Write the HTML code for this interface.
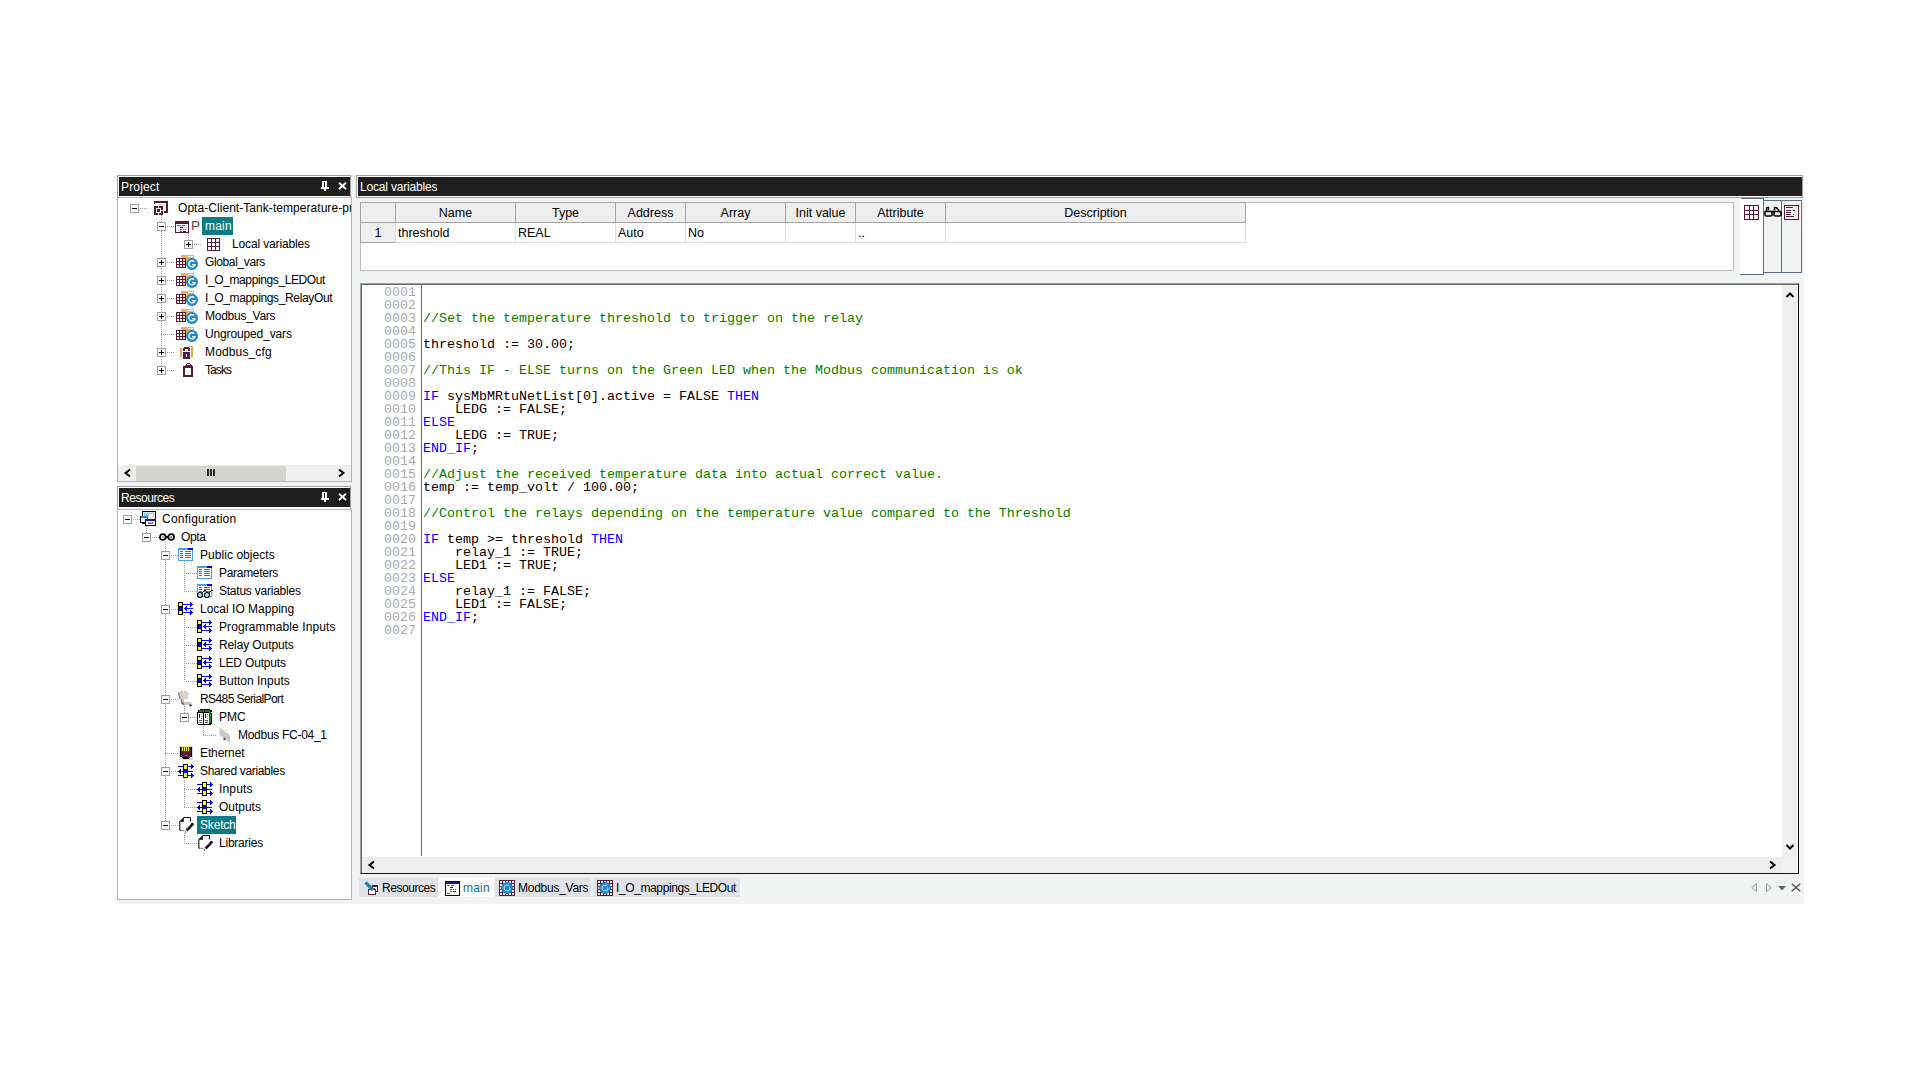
<!DOCTYPE html><html><head><meta charset="utf-8"><style>
*{box-sizing:border-box;margin:0;padding:0}
html,body{width:1920px;height:1080px;background:#fff;overflow:hidden;position:relative;font-family:"Liberation Sans",sans-serif}
.a{position:absolute}
svg{position:absolute;overflow:visible}
.hdr{position:absolute;background:#1e1e1e;color:#fff;font-size:12px;line-height:21px;padding-left:2px;white-space:nowrap;overflow:hidden}
.tree{position:absolute;background:#fff;border:1px solid #b4b4b4;overflow:hidden}
.tx{position:absolute;height:18px;line-height:18px;font-size:12px;color:#000;white-space:nowrap}
.sel{background:#0b7b85;color:#fff;padding:0 2px 0 3px}
.bx{position:absolute;width:9px;height:9px;border:1px solid #a0a0a0;background:#fff}
.bx:before{content:"";position:absolute;left:1px;top:3px;width:5px;height:1px;background:#000}
.bx.p:after{content:"";position:absolute;left:3px;top:1px;width:1px;height:5px;background:#000}
.vd{position:absolute;width:1px;background:repeating-linear-gradient(to bottom,#a0a0a0 0 1px,transparent 1px 2px)}
.hd{position:absolute;height:1px;background:repeating-linear-gradient(to right,#a0a0a0 0 1px,transparent 1px 2px)}
.th{position:absolute;top:202px;height:21px;border:1px solid #a5a5a5;background:#eeeeee;font-size:12.5px;line-height:21px;text-align:center;color:#000}
.td{position:absolute;top:223px;height:20px;border:1px solid #d9dee6;border-top:none;background:#fff;font-size:12.5px;line-height:20px;padding-left:2px;color:#000;white-space:nowrap}
.tn{position:absolute;top:223px;height:20px;border:1px solid #a5a5a5;border-top:none;background:#eeeeee;font-size:12.5px;line-height:20px;text-align:center;color:#000}
.code{position:absolute;left:423px;font-family:"Liberation Mono",monospace;font-size:13.33px;line-height:13px;height:13px;white-space:pre;color:#000}
.ln{position:absolute;left:384px;width:32px;text-align:right;font-family:"Liberation Mono",monospace;font-size:13.33px;line-height:13px;height:13px;white-space:pre;color:#aaaaaa}
.cm{color:#008000}.kw{color:#0000ff}
.tab{position:absolute;top:878px;height:19px;font-size:12px;line-height:19px;white-space:nowrap;color:#000;background:#dfe3e8}
</style></head><body>
<div class="a" style="left:117px;top:175px;width:1687px;height:729px;background:#f1f3f3"></div>
<div class="a" style="left:117px;top:175px;width:234px;height:23px;border:1px solid #a0a0a0;background:#fff"></div>
<div class="hdr" style="left:119px;top:177px;width:231px;height:19px;letter-spacing:0.167px;">Project</div>
<svg style="left:321px;top:181px" width="10" height="11" viewBox="0 0 10 11" shape-rendering="crispEdges"><rect x="1" y="0" width="5" height="6" fill="#fff"/><rect x="3" y="1" width="1" height="5" fill="#1e1e1e"/><rect x="0" y="6" width="8" height="2" fill="#fff"/><rect x="3" y="8" width="2" height="2" fill="#fff"/></svg>
<svg style="left:338px;top:182px" width="9" height="8" viewBox="0 0 9 8"><path d="M1 0.8L8 7M8 0.8L1 7" stroke="#fff" stroke-width="1.9"/></svg>
<div class="tree" style="left:117px;top:197px;width:235px;height:285px"></div>
<div class="a" style="left:118px;top:198px;width:233px;height:283px;overflow:hidden">
<div class="vd" style="left:43px;top:17px;height:154px"></div>
<div class="vd" style="left:70px;top:35px;height:11px"></div>
<div class="bx" style="left:12px;top:6px"></div>
<div class="hd" style="left:22px;top:10px;width:8px"></div>
<svg style="left:36px;top:3px" width="14" height="14" viewBox="0 0 14 14" shape-rendering="crispEdges"><rect x="2" y="2" width="10" height="9" fill="#eeeeee"/><rect x="2" y="3" width="3" height="2" fill="#fff"/><rect x="0" y="0" width="14" height="2" fill="#551a3a"/><rect x="0" y="2" width="1" height="1" fill="#551a3a"/><rect x="12" y="2" width="2" height="10" fill="#551a3a"/><rect x="10" y="10" width="4" height="2" fill="#551a3a"/><rect x="0" y="5" width="2" height="9" fill="#551a3a"/><rect x="0" y="5" width="4" height="2" fill="#551a3a"/><rect x="0" y="12" width="4" height="2" fill="#551a3a"/><rect x="5" y="5" width="4" height="2" fill="#551a3a"/><rect x="7" y="5" width="2" height="4" fill="#551a3a"/><rect x="7" y="10" width="2" height="4" fill="#551a3a"/><rect x="5" y="12" width="4" height="2" fill="#551a3a"/><rect x="3" y="8" width="3" height="3" fill="#551a3a"/></svg>
<div class="tx" style="left:60px;top:1px;letter-spacing:0.05px;">Opta-Client-Tank-temperature-project</div>
<div class="bx" style="left:39px;top:24px"></div>
<div class="hd" style="left:49px;top:28px;width:8px"></div>
<svg style="left:57px;top:23px" width="14" height="12" viewBox="0 0 14 12" shape-rendering="crispEdges"><rect x="0" y="0" width="14" height="12" fill="#551a3a"/><rect x="1" y="3" width="12" height="8" fill="#fff"/><rect x="2" y="4" width="10" height="6" fill="#eeeeee"/><rect x="2" y="4" width="4" height="1" fill="#5a6a88"/><rect x="7" y="4" width="3" height="1" fill="#0a9a0a"/><rect x="5" y="6" width="3" height="1" fill="#0000ff"/><rect x="5" y="8" width="2" height="1" fill="#5a6a88"/><rect x="8" y="8" width="1" height="1" fill="#0a9a0a"/><rect x="10" y="8" width="1" height="1" fill="#5a6a88"/><rect x="5" y="10" width="2" height="1" fill="#0a9a0a"/><rect x="8" y="10" width="3" height="1" fill="#0000ff"/></svg><div class="tx" style="left:73px;top:19px;color:#4a4a4a;font-size:13.5px;line-height:17px">P</div>
<div class="a sel" style="left:84px;top:19px;width:31px;height:18px"></div>
<div class="tx" style="left:87px;top:19px;color:#fff;letter-spacing:0.2px;">main</div>
<div class="bx p" style="left:66px;top:42px"></div>
<div class="hd" style="left:76px;top:46px;width:8px"></div>
<svg style="left:89px;top:40px" width="13" height="13" viewBox="0 0 13 13" shape-rendering="crispEdges"><rect x="0" y="0" width="13" height="13" fill="#551a3a"/><rect x="1" y="1" width="3" height="3" fill="#fff"/><rect x="1" y="5" width="3" height="3" fill="#fff"/><rect x="1" y="9" width="3" height="3" fill="#fff"/><rect x="5" y="1" width="3" height="3" fill="#fff"/><rect x="5" y="5" width="3" height="3" fill="#fff"/><rect x="5" y="9" width="3" height="3" fill="#fff"/><rect x="9" y="1" width="3" height="3" fill="#fff"/><rect x="9" y="5" width="3" height="3" fill="#fff"/><rect x="9" y="9" width="3" height="3" fill="#fff"/></svg>
<div class="tx" style="left:114px;top:37px;letter-spacing:-0.143px;">Local variables</div>
<div class="bx p" style="left:39px;top:60px"></div>
<div class="hd" style="left:49px;top:64px;width:8px"></div>
<svg style="left:58px;top:57px" width="23" height="15" viewBox="0 0 23 15" shape-rendering="crispEdges"><rect x="5" y="0" width="13" height="7" fill="#e8b060"/><rect x="11" y="0" width="7" height="1" fill="#e8b060"/><rect x="12" y="1" width="5" height="1" fill="#fff"/><rect x="0" y="3" width="10" height="10" fill="#551a3a"/><rect x="1" y="4" width="2" height="2" fill="#fff"/><rect x="1" y="7" width="2" height="2" fill="#fff"/><rect x="1" y="10" width="2" height="2" fill="#fff"/><rect x="4" y="4" width="2" height="2" fill="#fff"/><rect x="4" y="7" width="2" height="2" fill="#fff"/><rect x="4" y="10" width="2" height="2" fill="#fff"/><rect x="7" y="4" width="2" height="2" fill="#ffd070"/><rect x="7" y="7" width="2" height="2" fill="#ffd070"/><rect x="7" y="10" width="2" height="2" fill="#ffd070"/><circle cx="16" cy="9" r="6" fill="#1a8ad8" shape-rendering="auto"/><path d="M18.2 6.6A3.1 3.1 0 1 0 19 9.6H16" stroke="#fff" stroke-width="1.4" fill="none" shape-rendering="auto"/></svg>
<div class="tx" style="left:87px;top:55px;letter-spacing:-0.37px;">Global_vars</div>
<div class="bx p" style="left:39px;top:78px"></div>
<div class="hd" style="left:49px;top:82px;width:8px"></div>
<svg style="left:58px;top:75px" width="23" height="15" viewBox="0 0 23 15" shape-rendering="crispEdges"><rect x="5" y="0" width="13" height="7" fill="#e8b060"/><rect x="11" y="0" width="7" height="1" fill="#e8b060"/><rect x="12" y="1" width="5" height="1" fill="#fff"/><rect x="0" y="3" width="10" height="10" fill="#551a3a"/><rect x="1" y="4" width="2" height="2" fill="#fff"/><rect x="1" y="7" width="2" height="2" fill="#fff"/><rect x="1" y="10" width="2" height="2" fill="#fff"/><rect x="4" y="4" width="2" height="2" fill="#fff"/><rect x="4" y="7" width="2" height="2" fill="#fff"/><rect x="4" y="10" width="2" height="2" fill="#fff"/><rect x="7" y="4" width="2" height="2" fill="#ffd070"/><rect x="7" y="7" width="2" height="2" fill="#ffd070"/><rect x="7" y="10" width="2" height="2" fill="#ffd070"/><circle cx="16" cy="9" r="6" fill="#1a8ad8" shape-rendering="auto"/><path d="M18.2 6.6A3.1 3.1 0 1 0 19 9.6H16" stroke="#fff" stroke-width="1.4" fill="none" shape-rendering="auto"/></svg>
<div class="tx" style="left:87px;top:73px;letter-spacing:-0.389px;">I_O_mappings_LEDOut</div>
<div class="bx p" style="left:39px;top:96px"></div>
<div class="hd" style="left:49px;top:100px;width:8px"></div>
<svg style="left:58px;top:93px" width="23" height="15" viewBox="0 0 23 15" shape-rendering="crispEdges"><rect x="5" y="0" width="13" height="7" fill="#e8b060"/><rect x="11" y="0" width="7" height="1" fill="#e8b060"/><rect x="12" y="1" width="5" height="1" fill="#fff"/><rect x="0" y="3" width="10" height="10" fill="#551a3a"/><rect x="1" y="4" width="2" height="2" fill="#fff"/><rect x="1" y="7" width="2" height="2" fill="#fff"/><rect x="1" y="10" width="2" height="2" fill="#fff"/><rect x="4" y="4" width="2" height="2" fill="#fff"/><rect x="4" y="7" width="2" height="2" fill="#fff"/><rect x="4" y="10" width="2" height="2" fill="#fff"/><rect x="7" y="4" width="2" height="2" fill="#ffd070"/><rect x="7" y="7" width="2" height="2" fill="#ffd070"/><rect x="7" y="10" width="2" height="2" fill="#ffd070"/><circle cx="16" cy="9" r="6" fill="#1a8ad8" shape-rendering="auto"/><path d="M18.2 6.6A3.1 3.1 0 1 0 19 9.6H16" stroke="#fff" stroke-width="1.4" fill="none" shape-rendering="auto"/></svg>
<div class="tx" style="left:87px;top:91px;letter-spacing:-0.36px;">I_O_mappings_RelayOut</div>
<div class="bx p" style="left:39px;top:114px"></div>
<div class="hd" style="left:49px;top:118px;width:8px"></div>
<svg style="left:58px;top:111px" width="23" height="15" viewBox="0 0 23 15" shape-rendering="crispEdges"><rect x="5" y="0" width="13" height="7" fill="#e8b060"/><rect x="11" y="0" width="7" height="1" fill="#e8b060"/><rect x="12" y="1" width="5" height="1" fill="#fff"/><rect x="0" y="3" width="10" height="10" fill="#551a3a"/><rect x="1" y="4" width="2" height="2" fill="#fff"/><rect x="1" y="7" width="2" height="2" fill="#fff"/><rect x="1" y="10" width="2" height="2" fill="#fff"/><rect x="4" y="4" width="2" height="2" fill="#fff"/><rect x="4" y="7" width="2" height="2" fill="#fff"/><rect x="4" y="10" width="2" height="2" fill="#fff"/><rect x="7" y="4" width="2" height="2" fill="#ffd070"/><rect x="7" y="7" width="2" height="2" fill="#ffd070"/><rect x="7" y="10" width="2" height="2" fill="#ffd070"/><circle cx="16" cy="9" r="6" fill="#1a8ad8" shape-rendering="auto"/><path d="M18.2 6.6A3.1 3.1 0 1 0 19 9.6H16" stroke="#fff" stroke-width="1.4" fill="none" shape-rendering="auto"/></svg>
<div class="tx" style="left:87px;top:109px;letter-spacing:-0.26px;">Modbus_Vars</div>
<div class="hd" style="left:43px;top:136px;width:14px"></div>
<svg style="left:58px;top:129px" width="23" height="15" viewBox="0 0 23 15" shape-rendering="crispEdges"><rect x="5" y="0" width="13" height="7" fill="#e8b060"/><rect x="11" y="0" width="7" height="1" fill="#e8b060"/><rect x="12" y="1" width="5" height="1" fill="#fff"/><rect x="0" y="3" width="10" height="10" fill="#551a3a"/><rect x="1" y="4" width="2" height="2" fill="#fff"/><rect x="1" y="7" width="2" height="2" fill="#fff"/><rect x="1" y="10" width="2" height="2" fill="#fff"/><rect x="4" y="4" width="2" height="2" fill="#fff"/><rect x="4" y="7" width="2" height="2" fill="#fff"/><rect x="4" y="10" width="2" height="2" fill="#fff"/><rect x="7" y="4" width="2" height="2" fill="#ffd070"/><rect x="7" y="7" width="2" height="2" fill="#ffd070"/><rect x="7" y="10" width="2" height="2" fill="#ffd070"/><circle cx="16" cy="9" r="6" fill="#1a8ad8" shape-rendering="auto"/><path d="M18.2 6.6A3.1 3.1 0 1 0 19 9.6H16" stroke="#fff" stroke-width="1.4" fill="none" shape-rendering="auto"/></svg>
<div class="tx" style="left:87px;top:127px;letter-spacing:-0.138px;">Ungrouped_vars</div>
<div class="bx p" style="left:39px;top:150px"></div>
<div class="hd" style="left:49px;top:154px;width:8px"></div>
<svg style="left:62px;top:148px" width="13" height="13" viewBox="0 0 13 13" shape-rendering="crispEdges"><rect x="0" y="2" width="2" height="9" fill="#dca85a"/><rect x="11" y="0" width="2" height="11" fill="#dca85a"/><rect x="9" y="0" width="4" height="1" fill="#dca85a"/><rect x="4" y="1" width="5" height="2" fill="#551a3a"/><rect x="3" y="2" width="2" height="3" fill="#551a3a"/><rect x="8" y="2" width="2" height="3" fill="#551a3a"/><rect x="6" y="4" width="1" height="1" fill="#dca85a"/><rect x="3" y="6" width="7" height="7" fill="#551a3a"/><rect x="6" y="8" width="1" height="3" fill="#fff"/></svg>
<div class="tx" style="left:87px;top:145px;letter-spacing:0.144px;">Modbus_cfg</div>
<div class="bx p" style="left:39px;top:168px"></div>
<div class="hd" style="left:49px;top:172px;width:8px"></div>
<svg style="left:65px;top:165px" width="10" height="14" viewBox="0 0 10 14" shape-rendering="crispEdges"><rect x="4" y="0" width="3" height="1" fill="#551a3a"/><rect x="3" y="1" width="1" height="2" fill="#551a3a"/><rect x="7" y="1" width="1" height="2" fill="#551a3a"/><rect x="2" y="2" width="7" height="1" fill="#551a3a"/><rect x="0" y="3" width="10" height="11" fill="#551a3a"/><rect x="2" y="5" width="6" height="7" fill="#fff"/></svg>
<div class="tx" style="left:87px;top:163px;letter-spacing:-0.925px;">Tasks</div>
<div class="a" style="left:0px;top:267px;width:233px;height:16px;background:#efefef"></div>
<div class="a" style="left:18px;top:268px;width:150px;height:15px;background:#d3d3cf"></div>
<svg style="left:6px;top:271px" width="7" height="8" viewBox="0 0 7 8" shape-rendering="crispEdges"><path d="M6 0.5L1.5 4L6 7.5" stroke="#000" stroke-width="2" fill="none" shape-rendering="auto"/></svg>
<svg style="left:220px;top:271px" width="7" height="8" viewBox="0 0 7 8" shape-rendering="crispEdges"><path d="M1 0.5L5.5 4L1 7.5" stroke="#000" stroke-width="2" fill="none" shape-rendering="auto"/></svg>
<svg style="left:88px;top:270px" width="9" height="9" viewBox="0 0 9 9" shape-rendering="crispEdges"><rect x="1" y="1" width="1.5" height="7" fill="#222"/><rect x="4" y="1" width="1.5" height="7" fill="#222"/><rect x="7" y="1" width="1.5" height="7" fill="#222"/></svg>
</div>
<div class="a" style="left:117px;top:486px;width:234px;height:24px;border:1px solid #a0a0a0;background:#fff"></div>
<div class="hdr" style="left:119px;top:488px;width:231px;height:19px;letter-spacing:-0.438px;">Resources</div>
<svg style="left:321px;top:492px" width="10" height="11" viewBox="0 0 10 11" shape-rendering="crispEdges"><rect x="1" y="0" width="5" height="6" fill="#fff"/><rect x="3" y="1" width="1" height="5" fill="#1e1e1e"/><rect x="0" y="6" width="8" height="2" fill="#fff"/><rect x="3" y="8" width="2" height="2" fill="#fff"/></svg>
<svg style="left:338px;top:493px" width="9" height="8" viewBox="0 0 9 8"><path d="M1 0.8L8 7M8 0.8L1 7" stroke="#fff" stroke-width="1.9"/></svg>
<div class="tree" style="left:117px;top:509px;width:235px;height:391px"></div>
<div class="a" style="left:118px;top:510px;width:233px;height:389px;overflow:hidden">
<div class="vd" style="left:28px;top:16px;height:11px"></div>
<div class="vd" style="left:47px;top:32px;height:283px"></div>
<div class="vd" style="left:66px;top:51px;height:30px"></div>
<div class="vd" style="left:66px;top:105px;height:66px"></div>
<div class="vd" style="left:66px;top:196px;height:11px"></div>
<div class="vd" style="left:85px;top:214px;height:11px"></div>
<div class="vd" style="left:66px;top:268px;height:29px"></div>
<div class="vd" style="left:66px;top:323px;height:10px"></div>
<div class="bx" style="left:5px;top:5px"></div>
<div class="hd" style="left:15px;top:9px;width:7px"></div>
<svg style="left:22px;top:1px" width="16" height="15" viewBox="0 0 16 15" shape-rendering="crispEdges"><rect x="2" y="0" width="14" height="13" fill="#000"/><rect x="3" y="1" width="12" height="11" fill="#e8e8f0"/><rect x="4" y="2" width="10" height="3" fill="#80d0f0"/><rect x="9" y="3" width="4" height="2" fill="#fff"/><rect x="0" y="5" width="8" height="7" fill="#000"/><rect x="1" y="5" width="7" height="2" fill="#1a8ad8"/><rect x="1" y="7" width="6" height="4" fill="#eee"/><rect x="5" y="8" width="11" height="7" fill="#000"/><rect x="6" y="8" width="9" height="2" fill="#202080"/><rect x="6" y="10" width="9" height="4" fill="#fff"/><rect x="8" y="11" width="5" height="2" fill="#5a6a88"/><rect x="9" y="11" width="1" height="1" fill="#ff0"/><rect x="11" y="11" width="1" height="1" fill="#ff0"/></svg>
<div class="tx" style="left:44px;top:0px;letter-spacing:0.233px;">Configuration</div>
<div class="bx" style="left:24px;top:23px"></div>
<div class="hd" style="left:34px;top:27px;width:7px"></div>
<svg style="left:41px;top:23px" width="16" height="8" viewBox="0 0 16 8" shape-rendering="crispEdges"><g shape-rendering="auto"><circle cx="3.8" cy="4" r="2.9" fill="#fff" stroke="#000" stroke-width="1.7"/><circle cx="12.2" cy="4" r="2.9" fill="#fff" stroke="#000" stroke-width="1.7"/><rect x="6.5" y="3" width="3" height="2.2" fill="#000"/><rect x="3" y="3.2" width="1.6" height="1.6" fill="#888"/><rect x="11.4" y="3.2" width="1.6" height="1.6" fill="#555"/></g></svg>
<div class="tx" style="left:63px;top:18px;letter-spacing:-0.333px;">Opta</div>
<div class="bx" style="left:43px;top:41px"></div>
<div class="hd" style="left:53px;top:45px;width:7px"></div>
<svg style="left:60px;top:38px" width="15" height="13" viewBox="0 0 15 13" shape-rendering="crispEdges"><rect x="0" y="0" width="15" height="13" fill="#4aa0e8"/><rect x="1" y="2" width="13" height="10" fill="#fff"/><rect x="10" y="0" width="5" height="2" fill="#0000e0"/><rect x="2" y="3" width="3" height="1" fill="#5a6a88"/><rect x="7" y="3" width="6" height="1" fill="#5a6a88"/><rect x="2" y="5" width="3" height="1" fill="#5a6a88"/><rect x="7" y="5" width="6" height="1" fill="#5a6a88"/><rect x="2" y="7" width="3" height="1" fill="#5a6a88"/><rect x="7" y="7" width="6" height="1" fill="#5a6a88"/><rect x="2" y="9" width="3" height="1" fill="#5a6a88"/><rect x="7" y="9" width="6" height="1" fill="#5a6a88"/></svg>
<div class="tx" style="left:82px;top:36px;letter-spacing:0.054px;">Public objects</div>
<div class="hd" style="left:66px;top:63px;width:13px"></div>
<svg style="left:79px;top:56px" width="15" height="13" viewBox="0 0 15 13" shape-rendering="crispEdges"><rect x="0" y="0" width="15" height="13" fill="#4aa0e8"/><rect x="1" y="2" width="13" height="10" fill="#fff"/><rect x="10" y="0" width="5" height="2" fill="#0000e0"/><rect x="2" y="3" width="3" height="1" fill="#5a6a88"/><rect x="7" y="3" width="6" height="1" fill="#5a6a88"/><rect x="2" y="5" width="3" height="1" fill="#5a6a88"/><rect x="7" y="5" width="6" height="1" fill="#5a6a88"/><rect x="2" y="7" width="3" height="1" fill="#5a6a88"/><rect x="7" y="7" width="6" height="1" fill="#5a6a88"/><rect x="2" y="9" width="3" height="1" fill="#5a6a88"/><rect x="7" y="9" width="6" height="1" fill="#5a6a88"/></svg>
<div class="tx" style="left:101px;top:54px;letter-spacing:-0.3px;">Parameters</div>
<div class="hd" style="left:66px;top:81px;width:13px"></div>
<svg style="left:79px;top:74px" width="16" height="15" viewBox="0 0 16 15" shape-rendering="crispEdges"><rect x="0" y="0" width="15" height="13" fill="#4aa0e8"/><rect x="1" y="2" width="13" height="10" fill="#fff"/><rect x="10" y="0" width="5" height="2" fill="#0000e0"/><rect x="2" y="3" width="3" height="1" fill="#5a6a88"/><rect x="7" y="3" width="6" height="1" fill="#5a6a88"/><rect x="2" y="5" width="3" height="1" fill="#5a6a88"/><rect x="7" y="5" width="6" height="1" fill="#5a6a88"/><rect x="2" y="7" width="3" height="1" fill="#5a6a88"/><rect x="7" y="7" width="6" height="1" fill="#5a6a88"/><g shape-rendering="auto"><circle cx="3" cy="11" r="2.5" fill="#a8e8ff" stroke="#000" stroke-width="1.2"/><circle cx="10" cy="11" r="2.5" fill="#a8e8ff" stroke="#000" stroke-width="1.2"/><path d="M5 9L8 6L9 7M12 9L15 6L16 7" stroke="#000" stroke-width="1" fill="none"/></g></svg>
<div class="tx" style="left:101px;top:72px;letter-spacing:-0.233px;">Status variables</div>
<div class="bx" style="left:43px;top:95px"></div>
<div class="hd" style="left:53px;top:99px;width:7px"></div>
<svg style="left:60px;top:92px" width="15" height="13" viewBox="0 0 15 13" shape-rendering="crispEdges"><rect x="0" y="0" width="5" height="13" fill="#000"/><rect x="1" y="1" width="3" height="3" fill="#ffff00"/><rect x="1" y="5" width="3" height="3" fill="#0000ff"/><rect x="1" y="9" width="3" height="3" fill="#ffff00"/><rect x="5" y="2" width="8" height="1" fill="#0000ff"/><rect x="12" y="0" width="1" height="5" fill="#0000ff"/><rect x="13" y="1" width="1" height="3" fill="#0000ff"/><rect x="14" y="2" width="1" height="1" fill="#0000ff"/><rect x="7" y="6" width="8" height="1" fill="#0000ff"/><rect x="8" y="4" width="1" height="5" fill="#0000ff"/><rect x="7" y="5" width="1" height="3" fill="#0000ff"/><rect x="6" y="6" width="1" height="1" fill="#0000ff"/><rect x="5" y="10" width="8" height="1" fill="#0000ff"/><rect x="12" y="8" width="1" height="5" fill="#0000ff"/><rect x="13" y="9" width="1" height="3" fill="#0000ff"/><rect x="14" y="10" width="1" height="1" fill="#0000ff"/></svg>
<div class="tx" style="left:82px;top:90px;letter-spacing:0.007px;">Local IO Mapping</div>
<div class="hd" style="left:66px;top:117px;width:13px"></div>
<svg style="left:79px;top:110px" width="15" height="13" viewBox="0 0 15 13" shape-rendering="crispEdges"><rect x="0" y="0" width="5" height="13" fill="#000"/><rect x="1" y="1" width="3" height="3" fill="#ffff00"/><rect x="1" y="5" width="3" height="3" fill="#0000ff"/><rect x="1" y="9" width="3" height="3" fill="#ffff00"/><rect x="5" y="2" width="8" height="1" fill="#0000ff"/><rect x="12" y="0" width="1" height="5" fill="#0000ff"/><rect x="13" y="1" width="1" height="3" fill="#0000ff"/><rect x="14" y="2" width="1" height="1" fill="#0000ff"/><rect x="7" y="6" width="8" height="1" fill="#0000ff"/><rect x="8" y="4" width="1" height="5" fill="#0000ff"/><rect x="7" y="5" width="1" height="3" fill="#0000ff"/><rect x="6" y="6" width="1" height="1" fill="#0000ff"/><rect x="5" y="10" width="8" height="1" fill="#0000ff"/><rect x="12" y="8" width="1" height="5" fill="#0000ff"/><rect x="13" y="9" width="1" height="3" fill="#0000ff"/><rect x="14" y="10" width="1" height="1" fill="#0000ff"/></svg>
<div class="tx" style="left:101px;top:108px;letter-spacing:0.094px;">Programmable Inputs</div>
<div class="hd" style="left:66px;top:135px;width:13px"></div>
<svg style="left:79px;top:128px" width="15" height="13" viewBox="0 0 15 13" shape-rendering="crispEdges"><rect x="0" y="0" width="5" height="13" fill="#000"/><rect x="1" y="1" width="3" height="3" fill="#ffff00"/><rect x="1" y="5" width="3" height="3" fill="#0000ff"/><rect x="1" y="9" width="3" height="3" fill="#ffff00"/><rect x="5" y="2" width="8" height="1" fill="#0000ff"/><rect x="12" y="0" width="1" height="5" fill="#0000ff"/><rect x="13" y="1" width="1" height="3" fill="#0000ff"/><rect x="14" y="2" width="1" height="1" fill="#0000ff"/><rect x="7" y="6" width="8" height="1" fill="#0000ff"/><rect x="8" y="4" width="1" height="5" fill="#0000ff"/><rect x="7" y="5" width="1" height="3" fill="#0000ff"/><rect x="6" y="6" width="1" height="1" fill="#0000ff"/><rect x="5" y="10" width="8" height="1" fill="#0000ff"/><rect x="12" y="8" width="1" height="5" fill="#0000ff"/><rect x="13" y="9" width="1" height="3" fill="#0000ff"/><rect x="14" y="10" width="1" height="1" fill="#0000ff"/></svg>
<div class="tx" style="left:101px;top:126px;letter-spacing:-0.108px;">Relay Outputs</div>
<div class="hd" style="left:66px;top:153px;width:13px"></div>
<svg style="left:79px;top:146px" width="15" height="13" viewBox="0 0 15 13" shape-rendering="crispEdges"><rect x="0" y="0" width="5" height="13" fill="#000"/><rect x="1" y="1" width="3" height="3" fill="#ffff00"/><rect x="1" y="5" width="3" height="3" fill="#0000ff"/><rect x="1" y="9" width="3" height="3" fill="#ffff00"/><rect x="5" y="2" width="8" height="1" fill="#0000ff"/><rect x="12" y="0" width="1" height="5" fill="#0000ff"/><rect x="13" y="1" width="1" height="3" fill="#0000ff"/><rect x="14" y="2" width="1" height="1" fill="#0000ff"/><rect x="7" y="6" width="8" height="1" fill="#0000ff"/><rect x="8" y="4" width="1" height="5" fill="#0000ff"/><rect x="7" y="5" width="1" height="3" fill="#0000ff"/><rect x="6" y="6" width="1" height="1" fill="#0000ff"/><rect x="5" y="10" width="8" height="1" fill="#0000ff"/><rect x="12" y="8" width="1" height="5" fill="#0000ff"/><rect x="13" y="9" width="1" height="3" fill="#0000ff"/><rect x="14" y="10" width="1" height="1" fill="#0000ff"/></svg>
<div class="tx" style="left:101px;top:144px;letter-spacing:-0.17px;">LED Outputs</div>
<div class="hd" style="left:66px;top:171px;width:13px"></div>
<svg style="left:79px;top:164px" width="15" height="13" viewBox="0 0 15 13" shape-rendering="crispEdges"><rect x="0" y="0" width="5" height="13" fill="#000"/><rect x="1" y="1" width="3" height="3" fill="#ffff00"/><rect x="1" y="5" width="3" height="3" fill="#0000ff"/><rect x="1" y="9" width="3" height="3" fill="#ffff00"/><rect x="5" y="2" width="8" height="1" fill="#0000ff"/><rect x="12" y="0" width="1" height="5" fill="#0000ff"/><rect x="13" y="1" width="1" height="3" fill="#0000ff"/><rect x="14" y="2" width="1" height="1" fill="#0000ff"/><rect x="7" y="6" width="8" height="1" fill="#0000ff"/><rect x="8" y="4" width="1" height="5" fill="#0000ff"/><rect x="7" y="5" width="1" height="3" fill="#0000ff"/><rect x="6" y="6" width="1" height="1" fill="#0000ff"/><rect x="5" y="10" width="8" height="1" fill="#0000ff"/><rect x="12" y="8" width="1" height="5" fill="#0000ff"/><rect x="13" y="9" width="1" height="3" fill="#0000ff"/><rect x="14" y="10" width="1" height="1" fill="#0000ff"/></svg>
<div class="tx" style="left:101px;top:162px;letter-spacing:0px;">Button Inputs</div>
<div class="bx" style="left:43px;top:185px"></div>
<div class="hd" style="left:53px;top:189px;width:7px"></div>
<svg style="left:60px;top:180px" width="16" height="17" viewBox="0 0 16 17" shape-rendering="crispEdges"><g shape-rendering="auto"><path d="M4.5 8.5V11.5Q4.5 13.5 6.5 13.5H11Q13 13.5 13 16" stroke="#c4c4c4" stroke-width="3" fill="none"/><path d="M3.3 9V11.5Q3.3 14.5 6.5 14.8" stroke="#555" stroke-width="0.9" fill="none"/><path d="M0.5 2.5H11L9.5 9H2Z" fill="#d0d0d0"/><path d="M0.5 2.5L2 9" stroke="#777" stroke-width="1.2"/><rect x="2" y="1" width="3" height="1.5" fill="#f0b060"/><rect x="6" y="1" width="3" height="1.5" fill="#f0c070"/><circle cx="12.5" cy="15.5" r="1.1" fill="#111"/><circle cx="5" cy="13" r="0.7" fill="#6a1a4a"/></g></svg>
<div class="tx" style="left:82px;top:180px;letter-spacing:-0.593px;">RS485 SerialPort</div>
<div class="bx" style="left:62px;top:203px"></div>
<div class="hd" style="left:72px;top:207px;width:7px"></div>
<svg style="left:79px;top:199px" width="15" height="16" viewBox="0 0 15 16" shape-rendering="crispEdges"><rect x="3" y="0" width="10" height="1" fill="#000"/><rect x="1" y="1" width="14" height="3" fill="#000"/><rect x="2" y="1" width="5" height="2" fill="#0a8a0a"/><rect x="8" y="1" width="5" height="2" fill="#0a8a0a"/><rect x="0" y="3" width="15" height="13" fill="#000"/><rect x="12" y="3" width="2" height="11" fill="#0a8a0a"/><rect x="1" y="4" width="5" height="11" fill="#fff"/><rect x="7" y="4" width="5" height="11" fill="#fff"/><rect x="2" y="5" width="1" height="4" fill="#202080"/><rect x="8" y="5" width="1" height="4" fill="#202080"/><rect x="4" y="5" width="1" height="1" fill="#e07a20"/><rect x="10" y="5" width="1" height="1" fill="#e07a20"/><rect x="4" y="7" width="1" height="1" fill="#e07a20"/><rect x="10" y="7" width="1" height="1" fill="#e07a20"/><rect x="4" y="9" width="1" height="1" fill="#e07a20"/><rect x="10" y="9" width="1" height="1" fill="#e07a20"/><rect x="2" y="11" width="3" height="1" fill="#555"/><rect x="2" y="13" width="3" height="1" fill="#555"/><rect x="8" y="11" width="3" height="1" fill="#555"/><rect x="8" y="13" width="3" height="1" fill="#555"/><rect x="0" y="15" width="1" height="1" fill="#fff"/><rect x="14" y="15" width="1" height="1" fill="#fff"/><rect x="14" y="3" width="1" height="1" fill="#fff"/></svg>
<div class="tx" style="left:101px;top:198px;letter-spacing:-0.05px;">PMC</div>
<div class="hd" style="left:85px;top:225px;width:13px"></div>
<svg style="left:101px;top:217px" width="12" height="17" viewBox="0 0 12 17" shape-rendering="crispEdges"><g shape-rendering="auto"><path d="M0.5 0.5L11 8.5V16L0.5 8Z" fill="#c8c8c8"/><path d="M0.5 0.5L11 8.5" stroke="#d8d8d8" stroke-width="0.8"/><circle cx="5.5" cy="12" r="1.2" fill="#555"/><rect x="7" y="3" width="1" height="1" fill="#f0a040"/></g></svg>
<div class="tx" style="left:120px;top:216px;letter-spacing:-0.285px;">Modbus FC-04_1</div>
<div class="hd" style="left:47px;top:243px;width:13px"></div>
<svg style="left:61px;top:236px" width="14" height="14" viewBox="0 0 14 14" shape-rendering="crispEdges"><rect x="0" y="0" width="14" height="14" fill="#d8dde2"/><rect x="1" y="1" width="12" height="11" fill="#000"/><rect x="2" y="1" width="10" height="7" fill="#5a1a4a"/><rect x="3" y="1" width="1" height="4" fill="#ffff20"/><rect x="5" y="1" width="1" height="4" fill="#ffff20"/><rect x="7" y="1" width="1" height="4" fill="#ffff20"/><rect x="9" y="1" width="1" height="4" fill="#ffff20"/><rect x="2" y="8" width="10" height="2" fill="#5a1a4a"/><rect x="3" y="10" width="8" height="1" fill="#5a1a4a"/><rect x="1" y="11" width="2" height="1" fill="#d8dde2"/><rect x="11" y="11" width="2" height="1" fill="#d8dde2"/><rect x="4" y="12" width="6" height="1" fill="#000"/><rect x="6" y="9" width="2" height="1" fill="#888"/></svg>
<div class="tx" style="left:82px;top:234px;letter-spacing:-0.114px;">Ethernet</div>
<div class="bx" style="left:43px;top:257px"></div>
<div class="hd" style="left:53px;top:261px;width:7px"></div>
<svg style="left:60px;top:254px" width="16" height="14" viewBox="0 0 16 14" shape-rendering="crispEdges"><rect x="5" y="0" width="5" height="14" fill="#000"/><rect x="6" y="1" width="3" height="4" fill="#ffff00"/><rect x="6" y="5" width="3" height="4" fill="#0000ff"/><rect x="6" y="9" width="3" height="4" fill="#ffff00"/><rect x="0" y="2" width="5" height="1" fill="#0000ff"/><rect x="10" y="2" width="4" height="1" fill="#0000ff"/><rect x="13" y="0" width="1" height="5" fill="#0000ff"/><rect x="14" y="1" width="1" height="3" fill="#0000ff"/><rect x="15" y="2" width="1" height="1" fill="#0000ff"/><rect x="1" y="7" width="4" height="1" fill="#0000ff"/><rect x="10" y="7" width="5" height="1" fill="#0000ff"/><rect x="2" y="5" width="1" height="5" fill="#0000ff"/><rect x="1" y="6" width="1" height="3" fill="#0000ff"/><rect x="0" y="7" width="1" height="1" fill="#0000ff"/><rect x="0" y="11" width="5" height="1" fill="#0000ff"/><rect x="10" y="11" width="4" height="1" fill="#0000ff"/><rect x="13" y="9" width="1" height="5" fill="#0000ff"/><rect x="14" y="10" width="1" height="3" fill="#0000ff"/><rect x="15" y="11" width="1" height="1" fill="#0000ff"/></svg>
<div class="tx" style="left:82px;top:252px;letter-spacing:-0.327px;">Shared variables</div>
<div class="hd" style="left:66px;top:279px;width:13px"></div>
<svg style="left:79px;top:272px" width="16" height="14" viewBox="0 0 16 14" shape-rendering="crispEdges"><rect x="5" y="0" width="5" height="14" fill="#000"/><rect x="6" y="1" width="3" height="4" fill="#ffff00"/><rect x="6" y="5" width="3" height="4" fill="#0000ff"/><rect x="6" y="9" width="3" height="4" fill="#ffff00"/><rect x="0" y="2" width="5" height="1" fill="#0000ff"/><rect x="10" y="2" width="4" height="1" fill="#0000ff"/><rect x="13" y="0" width="1" height="5" fill="#0000ff"/><rect x="14" y="1" width="1" height="3" fill="#0000ff"/><rect x="15" y="2" width="1" height="1" fill="#0000ff"/><rect x="1" y="7" width="4" height="1" fill="#0000ff"/><rect x="10" y="7" width="5" height="1" fill="#0000ff"/><rect x="2" y="5" width="1" height="5" fill="#0000ff"/><rect x="1" y="6" width="1" height="3" fill="#0000ff"/><rect x="0" y="7" width="1" height="1" fill="#0000ff"/><rect x="0" y="11" width="5" height="1" fill="#0000ff"/><rect x="10" y="11" width="4" height="1" fill="#0000ff"/><rect x="13" y="9" width="1" height="5" fill="#0000ff"/><rect x="14" y="10" width="1" height="3" fill="#0000ff"/><rect x="15" y="11" width="1" height="1" fill="#0000ff"/></svg>
<div class="tx" style="left:101px;top:270px;letter-spacing:0.18px;">Inputs</div>
<div class="hd" style="left:66px;top:297px;width:13px"></div>
<svg style="left:79px;top:290px" width="16" height="14" viewBox="0 0 16 14" shape-rendering="crispEdges"><rect x="5" y="0" width="5" height="14" fill="#000"/><rect x="6" y="1" width="3" height="4" fill="#ffff00"/><rect x="6" y="5" width="3" height="4" fill="#0000ff"/><rect x="6" y="9" width="3" height="4" fill="#ffff00"/><rect x="0" y="2" width="5" height="1" fill="#0000ff"/><rect x="10" y="2" width="4" height="1" fill="#0000ff"/><rect x="13" y="0" width="1" height="5" fill="#0000ff"/><rect x="14" y="1" width="1" height="3" fill="#0000ff"/><rect x="15" y="2" width="1" height="1" fill="#0000ff"/><rect x="1" y="7" width="4" height="1" fill="#0000ff"/><rect x="10" y="7" width="5" height="1" fill="#0000ff"/><rect x="2" y="5" width="1" height="5" fill="#0000ff"/><rect x="1" y="6" width="1" height="3" fill="#0000ff"/><rect x="0" y="7" width="1" height="1" fill="#0000ff"/><rect x="0" y="11" width="5" height="1" fill="#0000ff"/><rect x="10" y="11" width="4" height="1" fill="#0000ff"/><rect x="13" y="9" width="1" height="5" fill="#0000ff"/><rect x="14" y="10" width="1" height="3" fill="#0000ff"/><rect x="15" y="11" width="1" height="1" fill="#0000ff"/></svg>
<div class="tx" style="left:101px;top:288px;letter-spacing:-0.017px;">Outputs</div>
<div class="bx" style="left:43px;top:311px"></div>
<div class="hd" style="left:53px;top:315px;width:7px"></div>
<svg style="left:61px;top:306px" width="16" height="17" viewBox="0 0 16 17" shape-rendering="crispEdges"><g shape-rendering="auto"><path d="M4.5 1.5H11Q11.5 1.5 11.5 2.5V5.5" stroke="#111" stroke-width="1.1" fill="none"/><path d="M0 5.8L4.8 1L4.8 5.8Z" fill="#111"/><path d="M1 5.5H4.5" stroke="#6a1a4a" stroke-width="1"/><path d="M0.8 5.5V14" stroke="#222" stroke-width="1.2" fill="none"/><path d="M1.5 14.5H5.5" stroke="#999" stroke-width="1.2"/><circle cx="1.3" cy="14.3" r="0.7" fill="#6a1a4a"/><path d="M7.5 14.5L12.8 9.2" stroke="#111" stroke-width="2.6"/><path d="M7 14L12 9" stroke="#6a1a4a" stroke-width="0.8"/><circle cx="13.3" cy="8.3" r="1.5" fill="#111"/><circle cx="6.5" cy="16" r="0.8" fill="#3a4a7a"/></g></svg>
<div class="a sel" style="left:79px;top:306px;width:39px;height:18px"></div>
<div class="tx" style="left:82px;top:306px;color:#fff;letter-spacing:-0.18px;">Sketch</div>
<div class="hd" style="left:66px;top:333px;width:13px"></div>
<svg style="left:80px;top:324px" width="16" height="17" viewBox="0 0 16 17" shape-rendering="crispEdges"><g shape-rendering="auto"><path d="M4.5 1.5H11Q11.5 1.5 11.5 2.5V5.5" stroke="#111" stroke-width="1.1" fill="none"/><path d="M0 5.8L4.8 1L4.8 5.8Z" fill="#111"/><path d="M1 5.5H4.5" stroke="#6a1a4a" stroke-width="1"/><path d="M0.8 5.5V14" stroke="#222" stroke-width="1.2" fill="none"/><path d="M1.5 14.5H5.5" stroke="#999" stroke-width="1.2"/><circle cx="1.3" cy="14.3" r="0.7" fill="#6a1a4a"/><path d="M7.5 14.5L12.8 9.2" stroke="#111" stroke-width="2.6"/><path d="M7 14L12 9" stroke="#6a1a4a" stroke-width="0.8"/><circle cx="13.3" cy="8.3" r="1.5" fill="#111"/><circle cx="6.5" cy="16" r="0.8" fill="#3a4a7a"/></g></svg>
<div class="tx" style="left:101px;top:324px;letter-spacing:-0.225px;">Libraries</div>
</div>
<div class="a" style="left:356px;top:175px;width:1447px;height:23px;border:1px solid #a0a0a0;background:#fff"></div>
<div class="hdr" style="left:358px;top:177px;width:1444px;height:19px;letter-spacing:-0.18px;">Local variables</div>
<div class="a" style="left:360px;top:202px;width:1374px;height:69px;border:1px solid #bcbcbc;background:#fff"></div>
<div class="th" style="left:360px;width:36px"></div>
<div class="th" style="left:395px;width:121px">Name</div>
<div class="th" style="left:515px;width:101px">Type</div>
<div class="th" style="left:615px;width:71px">Address</div>
<div class="th" style="left:685px;width:101px">Array</div>
<div class="th" style="left:785px;width:71px">Init value</div>
<div class="th" style="left:855px;width:91px">Attribute</div>
<div class="th" style="left:945px;width:301px">Description</div>
<div class="tn" style="left:360px;width:36px">1</div>
<div class="td" style="left:395px;width:121px">threshold</div>
<div class="td" style="left:515px;width:101px">REAL</div>
<div class="td" style="left:615px;width:71px">Auto</div>
<div class="td" style="left:685px;width:101px">No</div>
<div class="td" style="left:785px;width:71px"></div>
<div class="td" style="left:855px;width:91px">..</div>
<div class="td" style="left:945px;width:301px"></div>
<div class="a" style="left:360px;top:283px;width:1439px;height:591px;border:1px solid #111;border-top-color:#a0a0a0;border-left-color:#a0a0a0;background:#fff"></div>
<div class="a" style="left:361px;top:284px;width:1437px;height:589px;border-top:1px solid #696969;border-left:1px solid #696969"></div>
<div class="a" style="left:421px;top:285px;width:1px;height:571px;background:#5a6a88"></div>
<div class="ln" style="top:286px">0001</div>
<div class="ln" style="top:299px">0002</div>
<div class="ln" style="top:312px">0003</div>
<div class="code" style="top:312px"><span class="cm">//Set the temperature threshold to trigger on the relay</span></div>
<div class="ln" style="top:325px">0004</div>
<div class="ln" style="top:338px">0005</div>
<div class="code" style="top:338px">threshold := 30.00;</div>
<div class="ln" style="top:351px">0006</div>
<div class="ln" style="top:364px">0007</div>
<div class="code" style="top:364px"><span class="cm">//This IF - ELSE turns on the Green LED when the Modbus communication is ok</span></div>
<div class="ln" style="top:377px">0008</div>
<div class="ln" style="top:390px">0009</div>
<div class="code" style="top:390px"><span class="kw">IF</span> sysMbMRtuNetList[0].active = FALSE <span class="kw">THEN</span></div>
<div class="ln" style="top:403px">0010</div>
<div class="code" style="top:403px">    LEDG := FALSE;</div>
<div class="ln" style="top:416px">0011</div>
<div class="code" style="top:416px"><span class="kw">ELSE</span></div>
<div class="ln" style="top:429px">0012</div>
<div class="code" style="top:429px">    LEDG := TRUE;</div>
<div class="ln" style="top:442px">0013</div>
<div class="code" style="top:442px"><span class="kw">END_IF</span>;</div>
<div class="ln" style="top:455px">0014</div>
<div class="ln" style="top:468px">0015</div>
<div class="code" style="top:468px"><span class="cm">//Adjust the received temperature data into actual correct value.</span></div>
<div class="ln" style="top:481px">0016</div>
<div class="code" style="top:481px">temp := temp_volt / 100.00;</div>
<div class="ln" style="top:494px">0017</div>
<div class="ln" style="top:507px">0018</div>
<div class="code" style="top:507px"><span class="cm">//Control the relays depending on the temperature value compared to the Threshold</span></div>
<div class="ln" style="top:520px">0019</div>
<div class="ln" style="top:533px">0020</div>
<div class="code" style="top:533px"><span class="kw">IF</span> temp &gt;= threshold <span class="kw">THEN</span></div>
<div class="ln" style="top:546px">0021</div>
<div class="code" style="top:546px">    relay_1 := TRUE;</div>
<div class="ln" style="top:559px">0022</div>
<div class="code" style="top:559px">    LED1 := TRUE;</div>
<div class="ln" style="top:572px">0023</div>
<div class="code" style="top:572px"><span class="kw">ELSE</span></div>
<div class="ln" style="top:585px">0024</div>
<div class="code" style="top:585px">    relay_1 := FALSE;</div>
<div class="ln" style="top:598px">0025</div>
<div class="code" style="top:598px">    LED1 := FALSE;</div>
<div class="ln" style="top:611px">0026</div>
<div class="code" style="top:611px"><span class="kw">END_IF</span>;</div>
<div class="ln" style="top:624px">0027</div>
<div class="a" style="left:1740px;top:198px;width:24px;height:77px;background:#fff;border-top:1px solid #5c6c88;border-right:1px solid #5c6c88;border-bottom:1px solid #5c6c88"></div>
<div class="a" style="left:1740px;top:198px;width:1px;height:1px;background:#f1f3f3"></div>
<div class="a" style="left:1763px;top:200px;width:19px;height:73px;background:#f2f4f4;border:1px solid #5c6c88"></div>
<div class="a" style="left:1781px;top:200px;width:21px;height:73px;background:#f2f4f4;border:1px solid #5c6c88"></div>
<svg style="left:1744px;top:205px" width="15" height="15" viewBox="0 0 15 15" shape-rendering="crispEdges"><rect x="0" y="0" width="15" height="15" fill="#551a3a"/><rect x="1" y="1" width="4" height="4" fill="#eee"/><rect x="6" y="1" width="3" height="4" fill="#fff"/><rect x="10" y="1" width="4" height="4" fill="#eee"/><rect x="1" y="6" width="4" height="3" fill="#fff"/><rect x="6" y="6" width="3" height="3" fill="#fff"/><rect x="10" y="6" width="4" height="3" fill="#fff"/><rect x="1" y="10" width="4" height="4" fill="#eee"/><rect x="6" y="10" width="3" height="4" fill="#fff"/><rect x="10" y="10" width="4" height="4" fill="#eee"/></svg>
<svg style="left:1764px;top:207px" width="17" height="10" viewBox="0 0 17 10" shape-rendering="crispEdges"><g shape-rendering="auto"><path d="M0.5 4.5H17M1 4.5V8Q1 9 2.5 9H6.5Q8 9 8 8V4.5M10 4.5V8Q10 9 11.5 9H15.5Q17 9 17 8V4.5" stroke="#000" stroke-width="1.6" fill="none"/><path d="M2.5 4V1.5Q2.5 0.5 3.5 0.5H4.5V3.5M10.5 3.5V1Q10.5 0.5 11.5 0.5Q13 0.5 14 2.5L15 3.5" stroke="#000" stroke-width="1.5" fill="none"/></g></svg>
<svg style="left:1784px;top:205px" width="15" height="15" viewBox="0 0 15 15" shape-rendering="crispEdges"><rect x="0" y="0" width="15" height="15" fill="#551a3a"/><rect x="1" y="1" width="13" height="13" fill="#fff"/><rect x="10" y="2" width="3" height="11" fill="#eee"/><rect x="2" y="2" width="7" height="1" fill="#551a3a"/><rect x="2" y="5" width="5" height="1" fill="#551a3a"/><rect x="9" y="5" width="2" height="1" fill="#551a3a"/><rect x="2" y="7" width="5" height="1" fill="#551a3a"/><rect x="2" y="9" width="5" height="1" fill="#551a3a"/><rect x="9" y="9" width="1" height="1" fill="#551a3a"/><rect x="2" y="11" width="8" height="1" fill="#551a3a"/></svg>
<div class="a" style="left:1782px;top:285px;width:16px;height:572px;background:#eeeeee"></div>
<div class="a" style="left:362px;top:857px;width:1420px;height:16px;background:#eeeeee"></div>
<div class="a" style="left:1782px;top:857px;width:16px;height:16px;background:#f1f3f3"></div>
<svg style="left:1786px;top:291px" width="8" height="7" viewBox="0 0 8 7" shape-rendering="crispEdges"><path d="M0.5 6L4 2.5L7.5 6" stroke="#000" stroke-width="2" fill="none" shape-rendering="auto"/></svg>
<svg style="left:1786px;top:844px" width="8" height="7" viewBox="0 0 8 7" shape-rendering="crispEdges"><path d="M0.5 1L4 4.5L7.5 1" stroke="#000" stroke-width="2" fill="none" shape-rendering="auto"/></svg>
<svg style="left:368px;top:861px" width="7" height="8" viewBox="0 0 7 8" shape-rendering="crispEdges"><path d="M6 0.5L1.5 4L6 7.5" stroke="#000" stroke-width="2" fill="none" shape-rendering="auto"/></svg>
<svg style="left:1769px;top:861px" width="7" height="8" viewBox="0 0 7 8" shape-rendering="crispEdges"><path d="M1 0.5L5.5 4L1 7.5" stroke="#000" stroke-width="2" fill="none" shape-rendering="auto"/></svg>
<div class="tab" style="left:359px;width:79px"></div>
<svg style="left:363px;top:880px" width="17" height="16" viewBox="0 0 17 16" shape-rendering="crispEdges"><rect x="9" y="5" width="6" height="7" fill="#551a3a"/><rect x="10" y="7" width="4" height="4" fill="#fff"/><rect x="11" y="8" width="1" height="1" fill="#551a3a"/><rect x="5" y="9" width="8" height="6" fill="#551a3a"/><rect x="6" y="10" width="6" height="4" fill="#fff"/><g shape-rendering="auto"><path d="M2.5 2.5L10 10" stroke="#1a80d8" stroke-width="3.2"/><path d="M2.5 2.5L10 10" stroke="#1a8a70" stroke-width="1.2"/></g></svg>
<div class="tx" style="left:382px;top:879px;height:19px;line-height:19px;letter-spacing:-0.438px;">Resources</div>
<div class="tab" style="left:439px;width:55px;background:#fff"></div>
<svg style="left:445px;top:881px" width="15" height="15" viewBox="0 0 15 15" shape-rendering="crispEdges"><rect x="0" y="0" width="15" height="15" fill="#000"/><rect x="1" y="1" width="13" height="2" fill="#1a1a70"/><rect x="1" y="3" width="13" height="11" fill="#fff"/><rect x="2" y="4" width="3" height="1" fill="#5a6a88"/><rect x="6" y="4" width="3" height="1" fill="#0a9a0a"/><rect x="5" y="6" width="3" height="1" fill="#0000ff"/><rect x="5" y="8" width="2" height="1" fill="#5a6a88"/><rect x="8" y="8" width="1" height="1" fill="#0a9a0a"/><rect x="10" y="8" width="1" height="1" fill="#5a6a88"/><rect x="5" y="10" width="2" height="1" fill="#0a9a0a"/><rect x="8" y="10" width="3" height="1" fill="#0000ff"/><rect x="2" y="12" width="3" height="1" fill="#5a6a88"/></svg>
<div class="tx" style="left:463px;top:879px;height:19px;line-height:19px;color:#1a6e8c;letter-spacing:0.2px;">main</div>
<div class="tab" style="left:495px;width:96px"></div>
<svg style="left:499px;top:880px" width="16" height="16" viewBox="0 0 16 16" shape-rendering="crispEdges"><rect x="0" y="0" width="16" height="16" fill="#551a3a"/><rect x="1" y="1" width="2" height="2" fill="#fff"/><rect x="1" y="4" width="2" height="2" fill="#fff"/><rect x="1" y="7" width="2" height="2" fill="#fff"/><rect x="1" y="10" width="2" height="2" fill="#fff"/><rect x="1" y="13" width="2" height="2" fill="#fff"/><rect x="4" y="1" width="2" height="2" fill="#fff"/><rect x="4" y="4" width="2" height="2" fill="#fff"/><rect x="4" y="7" width="2" height="2" fill="#fff"/><rect x="4" y="10" width="2" height="2" fill="#fff"/><rect x="4" y="13" width="2" height="2" fill="#fff"/><rect x="7" y="1" width="2" height="2" fill="#fff"/><rect x="7" y="4" width="2" height="2" fill="#fff"/><rect x="7" y="7" width="2" height="2" fill="#fff"/><rect x="7" y="10" width="2" height="2" fill="#fff"/><rect x="7" y="13" width="2" height="2" fill="#fff"/><rect x="10" y="1" width="2" height="2" fill="#fff"/><rect x="10" y="4" width="2" height="2" fill="#fff"/><rect x="10" y="7" width="2" height="2" fill="#fff"/><rect x="10" y="10" width="2" height="2" fill="#fff"/><rect x="10" y="13" width="2" height="2" fill="#fff"/><rect x="13" y="1" width="2" height="2" fill="#fff"/><rect x="13" y="4" width="2" height="2" fill="#fff"/><rect x="13" y="7" width="2" height="2" fill="#fff"/><rect x="13" y="10" width="2" height="2" fill="#fff"/><rect x="13" y="13" width="2" height="2" fill="#fff"/><circle cx="8" cy="8" r="6" fill="#1a86d6" shape-rendering="auto"/><path d="M10.2 5.3H7.5Q5 5.3 5 8Q5 10.7 7.5 10.7H9.5Q11 10.7 11 9Q11 7.8 10 7.3" stroke="#e8eef2" stroke-width="1" fill="none" shape-rendering="auto"/></svg>
<div class="tx" style="left:518px;top:879px;height:19px;line-height:19px;letter-spacing:-0.26px;">Modbus_Vars</div>
<div class="tab" style="left:593px;width:147px"></div>
<svg style="left:597px;top:880px" width="16" height="16" viewBox="0 0 16 16" shape-rendering="crispEdges"><rect x="0" y="0" width="16" height="16" fill="#551a3a"/><rect x="1" y="1" width="2" height="2" fill="#fff"/><rect x="1" y="4" width="2" height="2" fill="#fff"/><rect x="1" y="7" width="2" height="2" fill="#fff"/><rect x="1" y="10" width="2" height="2" fill="#fff"/><rect x="1" y="13" width="2" height="2" fill="#fff"/><rect x="4" y="1" width="2" height="2" fill="#fff"/><rect x="4" y="4" width="2" height="2" fill="#fff"/><rect x="4" y="7" width="2" height="2" fill="#fff"/><rect x="4" y="10" width="2" height="2" fill="#fff"/><rect x="4" y="13" width="2" height="2" fill="#fff"/><rect x="7" y="1" width="2" height="2" fill="#fff"/><rect x="7" y="4" width="2" height="2" fill="#fff"/><rect x="7" y="7" width="2" height="2" fill="#fff"/><rect x="7" y="10" width="2" height="2" fill="#fff"/><rect x="7" y="13" width="2" height="2" fill="#fff"/><rect x="10" y="1" width="2" height="2" fill="#fff"/><rect x="10" y="4" width="2" height="2" fill="#fff"/><rect x="10" y="7" width="2" height="2" fill="#fff"/><rect x="10" y="10" width="2" height="2" fill="#fff"/><rect x="10" y="13" width="2" height="2" fill="#fff"/><rect x="13" y="1" width="2" height="2" fill="#fff"/><rect x="13" y="4" width="2" height="2" fill="#fff"/><rect x="13" y="7" width="2" height="2" fill="#fff"/><rect x="13" y="10" width="2" height="2" fill="#fff"/><rect x="13" y="13" width="2" height="2" fill="#fff"/><circle cx="8" cy="8" r="6" fill="#1a86d6" shape-rendering="auto"/><path d="M10.2 5.3H7.5Q5 5.3 5 8Q5 10.7 7.5 10.7H9.5Q11 10.7 11 9Q11 7.8 10 7.3" stroke="#e8eef2" stroke-width="1" fill="none" shape-rendering="auto"/></svg>
<div class="tx" style="left:616px;top:879px;height:19px;line-height:19px;letter-spacing:-0.389px;">I_O_mappings_LEDOut</div>
<svg style="left:1751px;top:883px" width="6" height="9" viewBox="0 0 6 9" shape-rendering="crispEdges"><path d="M5.5 0.5V8.5L0.8 4.5Z" fill="none" stroke="#999" stroke-width="1" shape-rendering="auto"/></svg>
<svg style="left:1766px;top:883px" width="6" height="9" viewBox="0 0 6 9" shape-rendering="crispEdges"><path d="M0.5 0.5V8.5L5.2 4.5Z" fill="none" stroke="#999" stroke-width="1" shape-rendering="auto"/></svg>
<svg style="left:1778px;top:886px" width="8" height="5" viewBox="0 0 8 5" shape-rendering="crispEdges"><path d="M0 0H8L4 4.5Z" fill="#666" shape-rendering="auto"/></svg>
<svg style="left:1791px;top:883px" width="10" height="9" viewBox="0 0 10 9" shape-rendering="crispEdges"><path d="M0.8 0.8L9.2 8.2M9.2 0.8L0.8 8.2" stroke="#555" stroke-width="1.5" shape-rendering="auto"/></svg>
</body></html>
